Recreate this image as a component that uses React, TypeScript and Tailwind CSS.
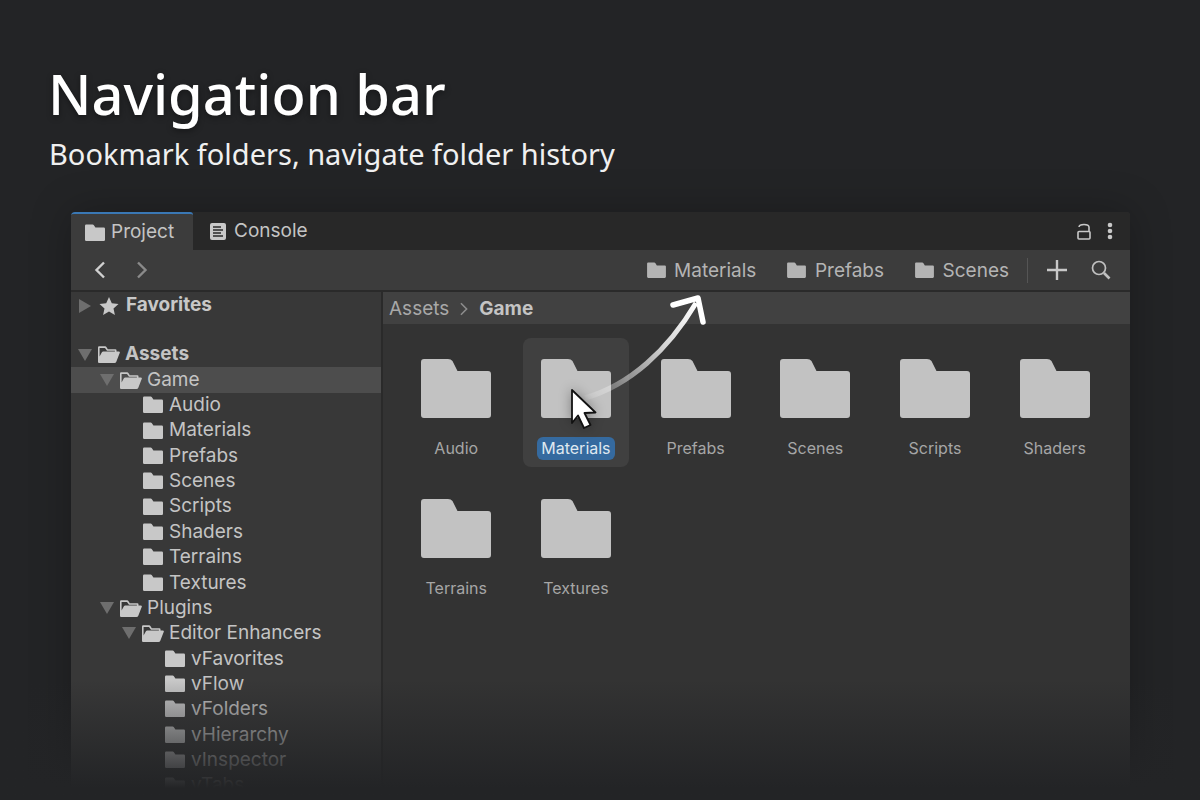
import React from 'react';

const uiFont = "font-['Inter',sans-serif]";

function Folder({ className = '' }: { className?: string }) {
  return (
    <svg viewBox="0 0 20 17" className={className} fill="currentColor">
      <path d="M1.2 0.5H7.6Q8.4 0.5 8.9 1.3L10.4 3.6H18.8Q20 3.6 20 4.8V15.8Q20 17 18.8 17H1.2Q0 17 0 15.8V1.7Q0 0.5 1.2 0.5Z" />
    </svg>
  );
}

function OpenFolder({ className = '' }: { className?: string }) {
  return (
    <svg viewBox="0 0 22 17" className={className} fill="currentColor">
      <path d="M1.1 0.3H7.2Q8 0.3 8.4 1L9.8 3.2H17.4Q18.5 3.2 18.5 4.3V5.4H16.9V4.8H9L7 1.9H1.6V10.5L3.9 6.2Q4.3 5.4 5.2 5.4H20.6Q22.4 5.4 21.7 7.1L18.3 15.7Q17.8 17 16.5 17H1.1Q0 17 0 15.9V1.4Q0 0.3 1.1 0.3Z" />
    </svg>
  );
}

function Caret({ open }: { open: boolean }) {
  return (
    <svg viewBox="0 0 14 14" className="w-[14px] h-[14px] text-[#6e6e6e]" fill="currentColor">
      {open ? <path d="M0 1H14L7 13Z" /> : <path d="M1 0L13 7L1 14Z" />}
    </svg>
  );
}

type Row = { label: string; depth: number; open?: boolean; bold?: boolean; active?: boolean };

const rows: Row[] = [
  { label: 'Assets', depth: 0, open: true, bold: true },
  { label: 'Game', depth: 1, open: true, active: true },
  { label: 'Audio', depth: 2 },
  { label: 'Materials', depth: 2 },
  { label: 'Prefabs', depth: 2 },
  { label: 'Scenes', depth: 2 },
  { label: 'Scripts', depth: 2 },
  { label: 'Shaders', depth: 2 },
  { label: 'Terrains', depth: 2 },
  { label: 'Textures', depth: 2 },
  { label: 'Plugins', depth: 1, open: true },
  { label: 'Editor Enhancers', depth: 2, open: true },
  { label: 'vFavorites', depth: 3 },
  { label: 'vFlow', depth: 3 },
  { label: 'vFolders', depth: 3 },
  { label: 'vHierarchy', depth: 3 },
  { label: 'vInspector', depth: 3 },
  { label: 'vTabs', depth: 3 },
];

function TreeRow({ row }: { row: Row }) {
  return (
    <div
      className={`flex items-center h-[25.35px] text-[19px] text-[#c4c4c4] ${row.active ? 'bg-[#4d4d4d]' : ''}`}
      style={{ paddingLeft: 7 + row.depth * 22 }}
    >
      {row.open ? (
        <>
          <Caret open />
          <OpenFolder className="w-[22px] h-[17px] ml-[6px] text-[#c8c8c8]" />
          <span className={`ml-[5px] ${row.bold ? 'font-bold' : ''}`}>{row.label}</span>
        </>
      ) : (
        <>
          <Folder className="w-[20px] h-[17px] ml-[21px] mt-[-1px] text-[#c8c8c8]" />
          <span className="ml-[6px]">{row.label}</span>
        </>
      )}
    </div>
  );
}

function GridFolder({ label, selected }: { label: string; selected?: boolean }) {
  return (
    <div className="relative w-[119.7px] h-[139.5px] flex flex-col items-center pt-[20px]">
      {selected && (
        <div className="absolute left-[7px] top-[-1px] w-[106px] h-[129px] rounded-[8px] bg-[#404040]" />
      )}
      <svg viewBox="0 0 70 59" className="relative w-[70px] h-[59px] text-[#c2c2c2]" fill="currentColor">
        <path d="M3 0H27Q30 0 31.5 2L36.5 12H67Q70 12 70 15V56Q70 59 67 59H3Q0 59 0 56V3Q0 0 3 0Z" />
      </svg>
      <span
        className={`relative mt-[19px] h-[23px] px-[4px] rounded-[6px] text-[16px] leading-[23px] ${
          selected ? 'bg-[#356a9f] text-[#dfe8f0]' : 'text-[#a6a6a6]'
        }`}
      >
        {label}
      </span>
    </div>
  );
}

function Bookmark({ label }: { label: string }) {
  return (
    <div className="flex items-center gap-[8.5px]">
      <Folder className="w-[19px] h-[16px] text-[#b4b4b4]" />
      <span className="mt-[2px]">{label}</span>
    </div>
  );
}

export default function App() {
  const grid = ['Audio', 'Materials', 'Prefabs', 'Scenes', 'Scripts', 'Shaders', 'Terrains', 'Textures'];

  return (
    <div className={`relative w-[1200px] h-[800px] overflow-hidden bg-[#232426] ${uiFont}`}>
      <div className="h-[212px] pl-[48px] pt-[57px] font-['Noto_Sans',sans-serif] text-white">
        <h1 className="text-[56px] leading-[72px] font-medium [text-shadow:0_2px_6px_rgba(0,0,0,0.4)]">Navigation bar</h1>
        <p className="ml-[1px] mt-[5px] text-[29px] leading-[40px] text-[#f0f0f0]">Bookmark folders, navigate folder history</p>
      </div>

      <div className="ml-[71px] w-[1059px] h-[588px] flex flex-col rounded-t-[4px] overflow-hidden bg-[#333333] shadow-[0_0_40px_rgba(0,0,0,0.25)]">
        {/* tabs */}
        <div className="h-[38px] shrink-0 flex items-stretch bg-[#282828] text-[19px] text-[#c4c4c4]">
          <div className="w-[122px] flex items-center pl-[14px] gap-[6px] bg-[#3c3c3c] border-t-[2px] border-[#3a78b5] rounded-t-[3px]">
            <Folder className="w-[20px] h-[17px] text-[#c8c8c8]" />
            <span>Project</span>
          </div>
          <div className="flex items-center pl-[17px] gap-[8px]">
            <svg viewBox="0 0 16 17" className="w-[16px] h-[17px] text-[#c8c8c8]">
              <rect width="16" height="17" rx="2" fill="currentColor" />
              <path d="M3 4H11M3 7H13M3 10H11M3 13H13" stroke="#282828" strokeWidth="1.4" />
            </svg>
            <span className="mt-[1px]">Console</span>
          </div>
          <div className="ml-auto flex items-center gap-[16px] pr-[17px]">
            <svg viewBox="0 0 14 17" className="w-[14px] h-[17px] text-[#c8c8c8]" fill="none" stroke="currentColor" strokeWidth="1.6">
              <path d="M2 4C2.5 0.6 11.5 0.6 12 4V8" />
              <rect x="1" y="8.5" width="12" height="7.5" rx="1" />
            </svg>
            <svg viewBox="0 0 6 18" className="w-[6px] h-[18px] text-[#c8c8c8]" fill="currentColor">
              <circle cx="3" cy="3" r="2.3" />
              <circle cx="3" cy="9" r="2.3" />
              <circle cx="3" cy="15" r="2.3" />
            </svg>
          </div>
        </div>

        {/* toolbar */}
        <div className="h-[42px] shrink-0 flex items-center bg-[#3c3c3c] border-b-[2px] border-[#2a2a2a] text-[19px] text-[#b4b4b4]">
          <svg viewBox="0 0 12 18" className="ml-[23px] w-[12px] h-[18px] text-[#d0d0d0]" fill="none" stroke="currentColor" strokeWidth="2.4">
            <path d="M10 1.5L2.5 9L10 16.5" />
          </svg>
          <svg viewBox="0 0 12 18" className="ml-[30px] w-[12px] h-[18px] text-[#8a8a8a]" fill="none" stroke="currentColor" strokeWidth="2.4">
            <path d="M2 1.5L9.5 9L2 16.5" />
          </svg>
          <div className="ml-auto flex items-center">
            <div className="flex items-center gap-[31px]">
              <Bookmark label="Materials" />
              <Bookmark label="Prefabs" />
              <Bookmark label="Scenes" />
            </div>
            <div className="ml-[18px] w-[1px] h-[25px] bg-[#555555]" />
            <svg viewBox="0 0 20 20" className="ml-[19px] w-[20px] h-[20px] text-[#c8c8c8]" fill="none" stroke="currentColor" strokeWidth="2.4">
              <path d="M10 0V20M0 10H20" />
            </svg>
            <svg viewBox="0 0 20 20" className="ml-[24px] mr-[19px] w-[20px] h-[20px] text-[#c0c0c0]" fill="none" stroke="currentColor">
              <circle cx="8" cy="8" r="6.5" strokeWidth="1.7" />
              <path d="M13 13L18.5 18.5" strokeWidth="2.6" />
            </svg>
          </div>
        </div>

        <div className="flex-1 flex min-h-0">
          {/* tree */}
          <div className="w-[310px] shrink-0 bg-[#383838] overflow-hidden">
            <div className="flex items-center h-[27px] text-[19px] font-bold text-[#c8c8c8] pl-[7px]">
              <Caret open={false} />
              <svg viewBox="0 0 20 20" className="ml-[7px] w-[20px] h-[20px] text-[#c8c8c8]" fill="currentColor">
                <path d="M10 1L12.8 7.2L19.5 7.9L14.5 12.4L15.9 19L10 15.6L4.1 19L5.5 12.4L0.5 7.9L7.2 7.2Z" />
              </svg>
              <span className="ml-[7px]">Favorites</span>
            </div>
            <div className="h-[23px]" />
            {rows.map((row) => (
              <TreeRow key={row.label} row={row} />
            ))}
          </div>
          <div className="w-[2px] shrink-0 bg-[#2a2a2a]" />

          {/* browser */}
          <div className="flex-1 flex flex-col min-w-0">
            <div className="h-[32px] shrink-0 flex items-center pl-[6px] pt-[2px] bg-[#414141] text-[19px] text-[#a8a8a8]">
              <span>Assets</span>
              <svg viewBox="0 0 10 16" className="mx-[10px] w-[10px] h-[14px] text-[#8c8c8c]" fill="none" stroke="currentColor" strokeWidth="1.8">
                <path d="M1.5 1.5L8 8L1.5 14.5" />
              </svg>
              <span className="font-bold text-[#c4c4c4]">Game</span>
            </div>
            <div className="flex flex-wrap content-start pl-[13.4px] pt-[15px]">
              {grid.map((name) => (
                <GridFolder key={name} label={name} selected={name === 'Materials'} />
              ))}
            </div>
          </div>
        </div>
      </div>

      {/* bottom fade over the window */}
      <div className="absolute left-0 right-0 bottom-0 h-[120px] bg-gradient-to-b from-[#23242600] to-[#232426] to-[90%]" />

      {/* drag arrow and cursor */}
      <svg viewBox="0 0 1200 800" className="absolute inset-0 w-[1200px] h-[800px] pointer-events-none">
        <defs>
          <linearGradient id="trail" gradientUnits="userSpaceOnUse" x1="585" y1="398" x2="697" y2="302">
            <stop offset="0" stopColor="#ffffff" stopOpacity="0.1" />
            <stop offset="0.3" stopColor="#ffffff" stopOpacity="0.45" />
            <stop offset="0.65" stopColor="#ffffff" stopOpacity="0.8" />
            <stop offset="1" stopColor="#ffffff" />
          </linearGradient>
        </defs>
        <path d="M585 398C630 385 668 350 696 303" fill="none" stroke="url(#trail)" strokeWidth="5" />
        <path d="M673 305L698 298L703 322" fill="none" stroke="#ffffff" strokeWidth="5.5" strokeLinecap="round" strokeLinejoin="round" />
        <path
          d="M572 390L595.5 412.5L584.5 413L590.5 425L584 428L578 415.5L572 423Z"
          fill="#ffffff"
          stroke="#111111"
          strokeWidth="1.8"
          strokeLinejoin="round"
          className="drop-shadow-[0_0_6px_rgba(0,0,0,0.35)]"
        />
      </svg>
    </div>
  );
}
